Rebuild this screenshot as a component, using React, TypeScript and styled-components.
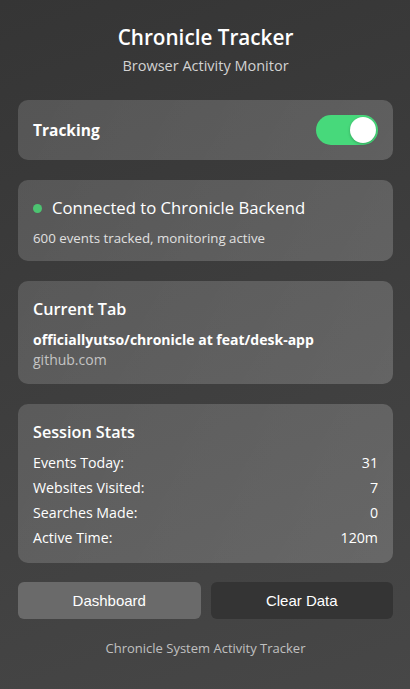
import React, { useState } from 'react'
import styled, { createGlobalStyle } from 'styled-components'

const GlobalStyle = createGlobalStyle`
  html, body {
    margin: 0;
    padding: 0;
  }
  body {
    width: 410px;
    min-height: 689px;
    background: linear-gradient(160deg, #353535 0%, #3e3e3e 50%, #474747 100%);
    font-family: "Open Sans", "Noto Sans", sans-serif;
    color: #fff;
  }
`

interface Stat {
  label: string
  value: string
}

const stats: Stat[] = [
  { label: 'Events Today:', value: '31' },
  { label: 'Websites Visited:', value: '7' },
  { label: 'Searches Made:', value: '0' },
  { label: 'Active Time:', value: '120m' }
]

export default function App () {
  const [tracking, setTracking] = useState<boolean>(true)

  return (
    <>
      <GlobalStyle />
      <Popup>
        <Header>
          <Title>Chronicle Tracker</Title>
          <Subtitle>Browser Activity Monitor</Subtitle>
        </Header>

        <Card>
          <ToggleRow>
            <ToggleLabel>Tracking</ToggleLabel>
            <Switch $on={tracking} onClick={() => setTracking(prev => !prev)}>
              <Knob />
            </Switch>
          </ToggleRow>
        </Card>

        <Card>
          <StatusLine>
            <StatusDot />
            <StatusText>Connected to Chronicle Backend</StatusText>
          </StatusLine>
          <StatusDetail>600 events tracked, monitoring active</StatusDetail>
        </Card>

        <Card>
          <CardTitle>Current Tab</CardTitle>
          <TabTitle>officiallyutso/chronicle at feat/desk-app</TabTitle>
          <TabDomain>github.com</TabDomain>
        </Card>

        <Card>
          <CardTitle>Session Stats</CardTitle>
          <StatList>
            {stats.map(stat => (
              <StatRow key={stat.label}>
                <span>{stat.label}</span>
                <span>{stat.value}</span>
              </StatRow>
            ))}
          </StatList>
        </Card>

        <Actions>
          <ActionButton $variant="primary">Dashboard</ActionButton>
          <ActionButton $variant="dark">Clear Data</ActionButton>
        </Actions>

        <Footer>Chronicle System Activity Tracker</Footer>
      </Popup>
    </>
  )
}

const Popup = styled.div`
  display: flex;
  flex-direction: column;
  gap: 20px;
  padding: 23px 17px 20px 18px;
`

const Header = styled.header`
  display: flex;
  flex-direction: column;
  align-items: center;
  gap: 6px;
  margin-bottom: 5px;
`

const Title = styled.h1`
  margin: 0;
  font-size: 20.7px;
  font-weight: 600;
  line-height: 28px;
`

const Subtitle = styled.p`
  margin: 0;
  font-size: 14.5px;
  line-height: 18px;
  color: #d2d2d2;
`

const Card = styled.section`
  background: linear-gradient(120deg, rgba(255, 255, 255, 0.15), rgba(255, 255, 255, 0.19));
  border-radius: 10px;
  padding: 15px 15px 14px;
  display: flex;
  flex-direction: column;
`

const ToggleRow = styled.div`
  display: flex;
  align-items: center;
  justify-content: space-between;
  height: 30px;
  margin-bottom: 1px;
`

const ToggleLabel = styled.span`
  font-size: 15.5px;
  font-weight: 700;
`

const Switch = styled.button<{ $on: boolean }>`
  width: 62px;
  height: 30px;
  border: none;
  border-radius: 15px;
  padding: 0 2px;
  background: ${props => props.$on ? '#47d97b' : '#777'};
  display: flex;
  align-items: center;
  justify-content: ${props => props.$on ? 'flex-end' : 'flex-start'};
  cursor: pointer;
`

const Knob = styled.span`
  width: 26px;
  height: 26px;
  border-radius: 50%;
  background: #fff;
  box-shadow: 0 1px 3px rgba(0, 0, 0, 0.25);
`

const StatusLine = styled.div`
  display: flex;
  align-items: center;
  gap: 10px;
`

const StatusDot = styled.span`
  width: 9px;
  height: 9px;
  border-radius: 50%;
  background: #4cc471;
`

const StatusText = styled.span`
  font-size: 16.7px;
  line-height: 26px;
`

const StatusDetail = styled.span`
  margin-top: 8px;
  font-size: 13.3px;
  line-height: 18px;
  color: #e0e0e0;
`

const CardTitle = styled.h2`
  margin: 0 0 8px;
  font-size: 16.2px;
  font-weight: 600;
  line-height: 26px;
`

const TabTitle = styled.div`
  font-size: 14px;
  font-weight: 700;
  line-height: 20px;
`

const TabDomain = styled.div`
  font-size: 14px;
  line-height: 20px;
  color: #c4c4c4;
`

const StatList = styled.div`
  display: flex;
  flex-direction: column;
  margin: -3px 0 -1px;
`

const StatRow = styled.div`
  display: flex;
  justify-content: space-between;
  font-size: 14.2px;
  line-height: 25px;
`

const Actions = styled.div`
  display: grid;
  grid-template-columns: 1fr 1fr;
  gap: 10px;
  margin-top: -1px;
`

const ActionButton = styled.button<{ $variant: 'primary' | 'dark' }>`
  height: 37px;
  border: none;
  border-radius: 6px;
  font-family: "Liberation Sans", Arial, sans-serif;
  font-size: 15px;
  color: #fff;
  background: ${props => props.$variant === 'primary' ? '#6a6a6a' : '#343434'};
  cursor: pointer;
`

const Footer = styled.footer`
  text-align: center;
  font-size: 13px;
  line-height: 18px;
  color: #c0c0c0;
`
